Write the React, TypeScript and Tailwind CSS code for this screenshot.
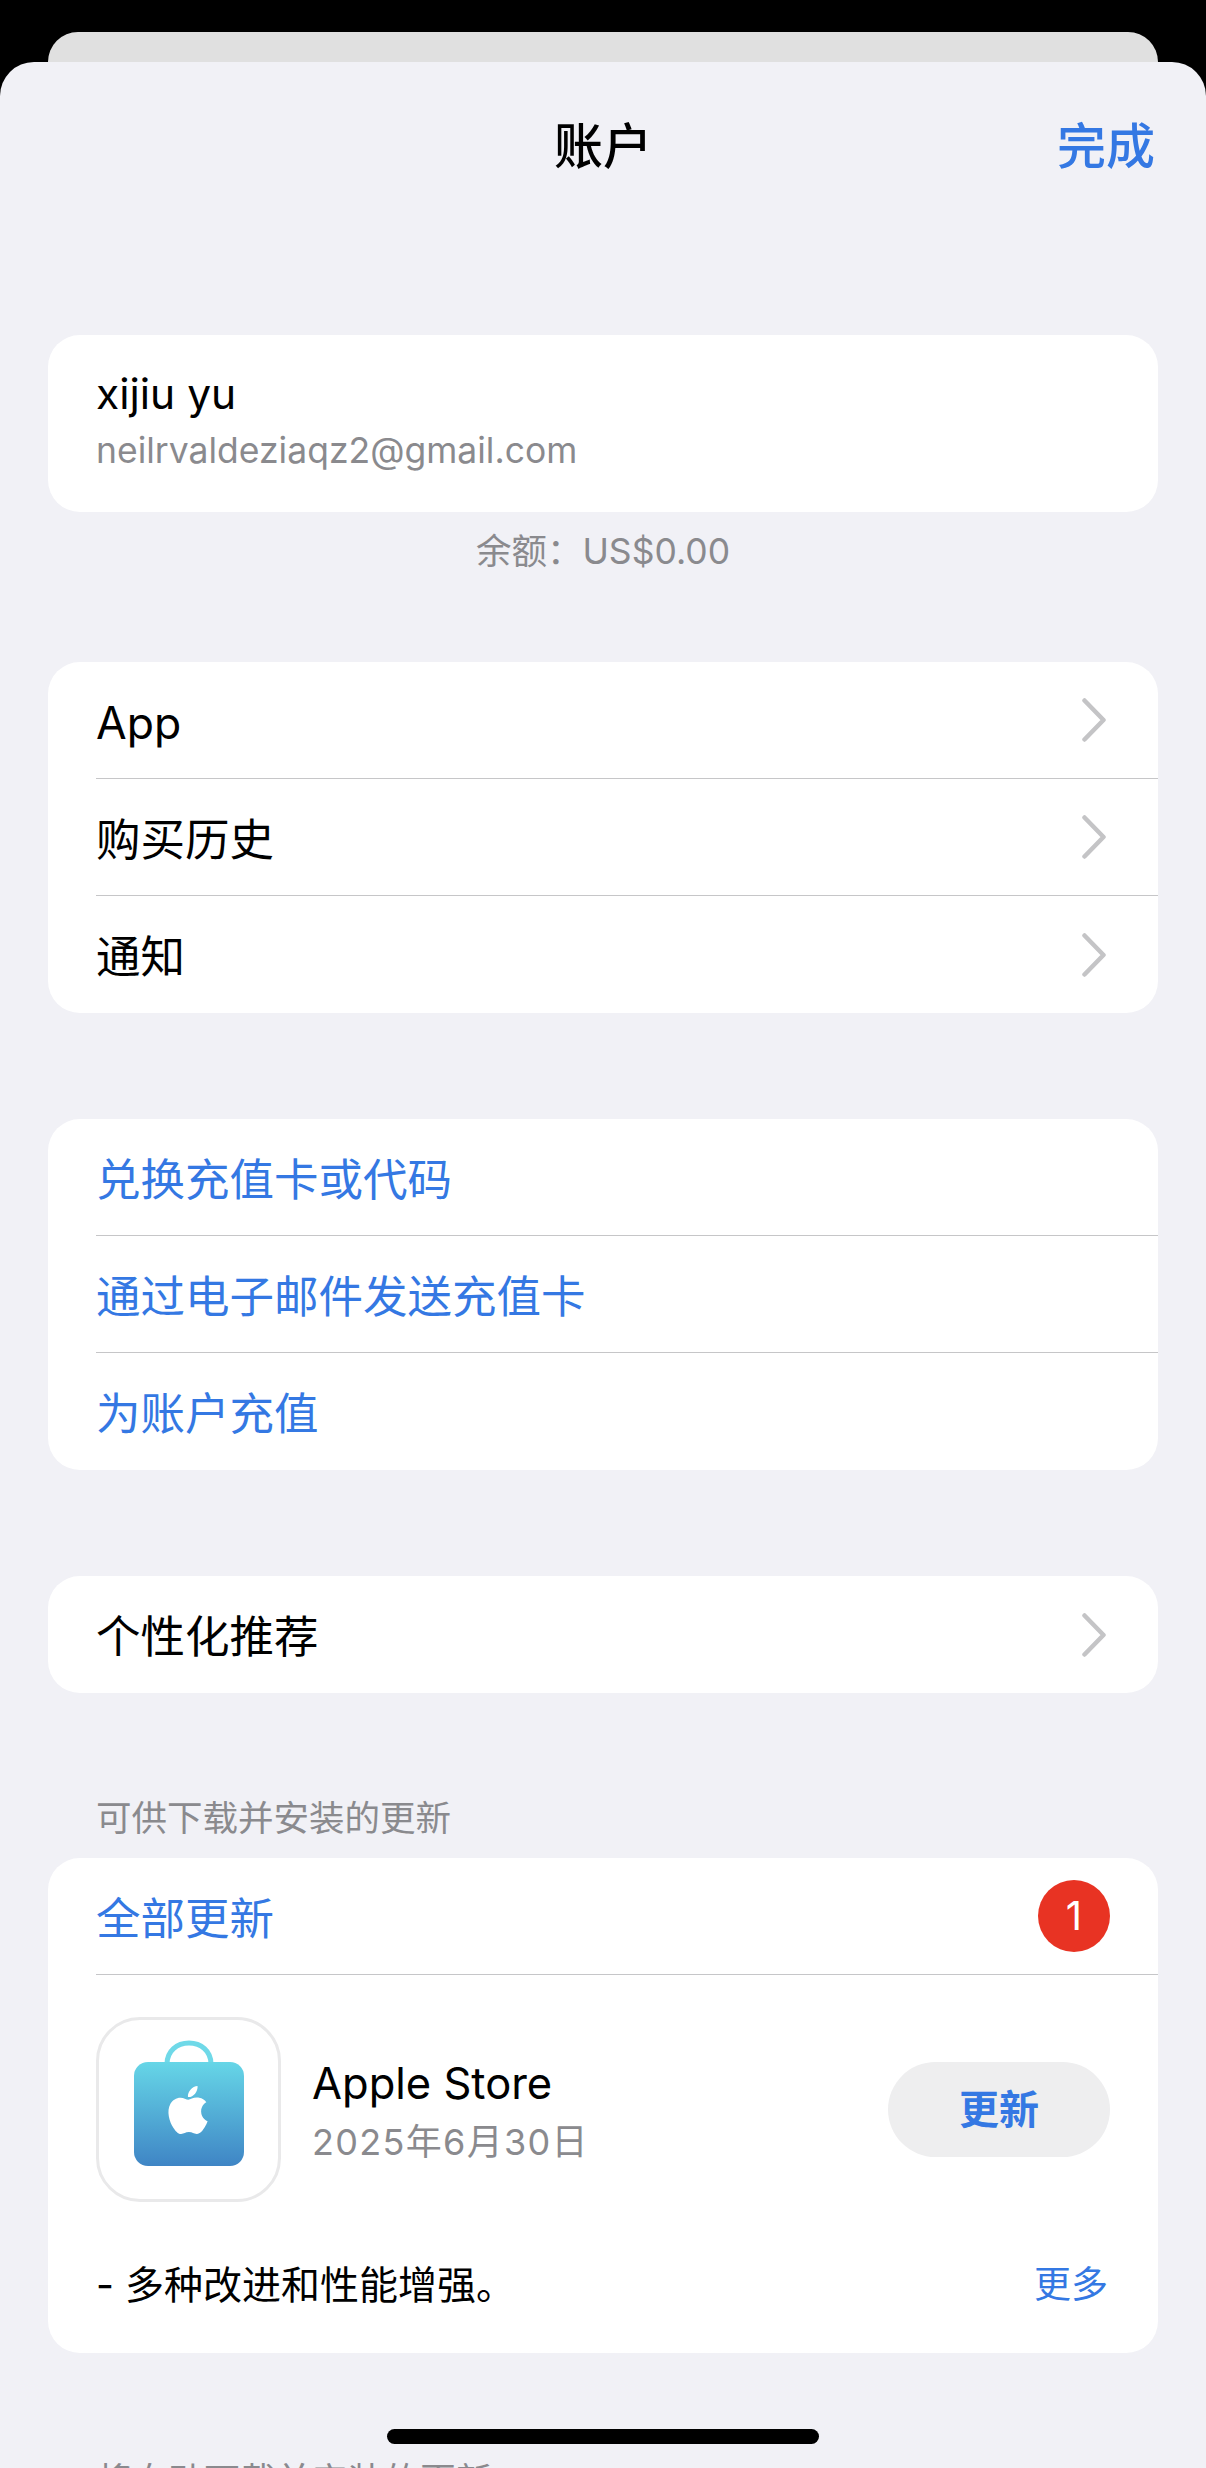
const FONT = "font-['Inter','Noto_Sans_CJK_SC',sans-serif]";

function Chevron() {
  return (
    <svg width="24" height="44" viewBox="0 0 24 44" fill="none" className="shrink-0">
      <path d="M2.5 2.5L21.5 22L2.5 41.5" stroke="#c4c4c6" strokeWidth="4.5" strokeLinecap="round" strokeLinejoin="round" />
    </svg>
  );
}

function Row({ label, blue, chevron, last }: { label: string; blue?: boolean; chevron?: boolean; last?: boolean }) {
  return (
    <div className={`ml-[48px] flex h-[117px] items-center justify-between pr-[52px] ${last ? '' : 'border-b border-[#c6c6c8]'}`}>
      <span className={`pt-[5px] text-[44.5px] leading-[56px] ${blue ? 'text-[#3478e3]' : 'text-black'}`}>{label}</span>
      {chevron && <Chevron />}
    </div>
  );
}

function AppIcon() {
  return (
    <div className="flex h-[185px] w-[185px] shrink-0 items-center justify-center rounded-[44px] border-[3px] border-[#e9e9ea] bg-white">
      <svg width="110" height="128" viewBox="0 0 110 128" className="-mt-[11px]">
        <defs>
          <linearGradient id="bag" x1="0" y1="0" x2="0" y2="1">
            <stop offset="0" stopColor="#66d6e7" />
            <stop offset="1" stopColor="#3f85c5" />
          </linearGradient>
        </defs>
        <path d="M33 26V24C33 11 43 3 55 3C67 3 77 11 77 24V26" fill="none" stroke="#6fd9e8" strokeWidth="5" />
        <rect x="0" y="22" width="110" height="104" rx="14" fill="url(#bag)" />
        <g transform="translate(30 46) scale(2)">
          <path
            fill="#fff"
            d="M12.152 6.896c-.948 0-2.415-1.078-3.96-1.04-2.04.027-3.91 1.183-4.961 3.014-2.117 3.675-.546 9.103 1.519 12.09 1.013 1.454 2.208 3.09 3.792 3.039 1.52-.065 2.09-.987 3.935-.987 1.831 0 2.35.987 3.96.948 1.637-.026 2.676-1.48 3.676-2.948 1.156-1.688 1.636-3.325 1.662-3.415-.039-.013-3.182-1.221-3.22-4.857-.026-3.04 2.48-4.494 2.597-4.559-1.429-2.09-3.623-2.324-4.39-2.376-2-.156-3.675 1.09-4.61 1.09zM15.53 3.83c.843-1.012 1.4-2.427 1.245-3.83-1.207.052-2.662.805-3.532 1.818-.78.896-1.454 2.338-1.273 3.714 1.338.104 2.715-.688 3.559-1.701"
          />
        </g>
      </svg>
    </div>
  );
}

export default function App() {
  return (
    <div className={`relative h-[2468px] w-[1206px] overflow-hidden bg-black pt-[32px] ${FONT}`}>
      {/* card behind the sheet */}
      <div className="mx-[48px] h-[30px] rounded-t-[30px] bg-[#e0e0e0]" />

      <div className="h-[2406px] rounded-t-[34px] bg-[#f1f1f6] px-[48px]">
        {/* Header */}
        <div className="-mx-[48px] grid h-[273px] grid-cols-[1fr_auto_1fr] px-[51px] pt-[56px]">
          <div />
          <div className="text-center text-[49px] leading-[58px] font-medium text-black">账户</div>
          <div className="text-right text-[49px] leading-[58px] font-medium text-[#3478e3]">完成</div>
        </div>

        {/* Account */}
        <div className="flex h-[177px] flex-col rounded-[32px] bg-white pt-[31px] pl-[48px]">
          <div className="text-[42.5px] leading-[56px] text-black">xijiu yu</div>
          <div className="text-[35.5px] leading-[57px] text-[#8a8a8e]">neilrvaldeziaqz2@gmail.com</div>
        </div>
        <div className="mt-[18px] text-center text-[35.5px] leading-[44px] text-[#8a8a8e]">余额：US$0.00</div>

        <div className="mt-[88px] rounded-[32px] bg-white">
          <Row label="App" chevron />
          <Row label="购买历史" chevron />
          <Row label="通知" chevron last />
        </div>

        <div className="mt-[106px] rounded-[32px] bg-white">
          <Row label="兑换充值卡或代码" blue />
          <Row label="通过电子邮件发送充值卡" blue />
          <Row label="为账户充值" blue last />
        </div>

        <div className="mt-[106px] rounded-[32px] bg-white">
          <Row label="个性化推荐" chevron last />
        </div>

        <div className="mt-[104px] pl-[48px] text-[35.5px] leading-[44px] text-[#8a8a8e]">可供下载并安装的更新</div>

        {/* Updates */}
        <div className="mt-[17px] rounded-[32px] bg-white">
          <div className="ml-[48px] flex h-[117px] items-center justify-between border-b border-[#c6c6c8] pr-[48px]">
            <span className="pt-[5px] text-[44.5px] leading-[56px] text-[#3478e3]">全部更新</span>
            <span className="flex h-[72px] w-[72px] items-center justify-center rounded-full bg-[#e83323] text-[40px] leading-none text-white">1</span>
          </div>
          <div className="flex items-center px-[48px] pt-[42px]">
            <AppIcon />
            <div className="ml-[31px] flex-1 pt-[4px]">
              <div className="text-[43.5px] leading-[60px] text-black">Apple Store</div>
              <div className="text-[36px] leading-[58px] tracking-[1.3px] text-[#8a8a8e]">2025年6月30日</div>
            </div>
            <button className="h-[95px] w-[222px] rounded-full bg-[#eeeeef] text-[40px] font-semibold text-[#3478e3]">更新</button>
          </div>
          <div className="mt-[53px] flex h-[60px] items-center justify-between pr-[50px] pl-[48px]">
            <span className="text-[39px] leading-[60px] text-black">- 多种改进和性能增强。</span>
            <span className="text-[37px] leading-[60px] text-[#3478e3]">更多</span>
          </div>
          <div className="h-[38px]" />
        </div>

        <div className="mt-[106px] pl-[48px] text-[36px] leading-[44px] text-[#8a8a8e]">将自动下载并安装的更新</div>
      </div>

      {/* home indicator */}
      <div className="absolute top-[2429px] left-[387px] h-[15px] w-[432px] rounded-full bg-black" />
    </div>
  );
}
